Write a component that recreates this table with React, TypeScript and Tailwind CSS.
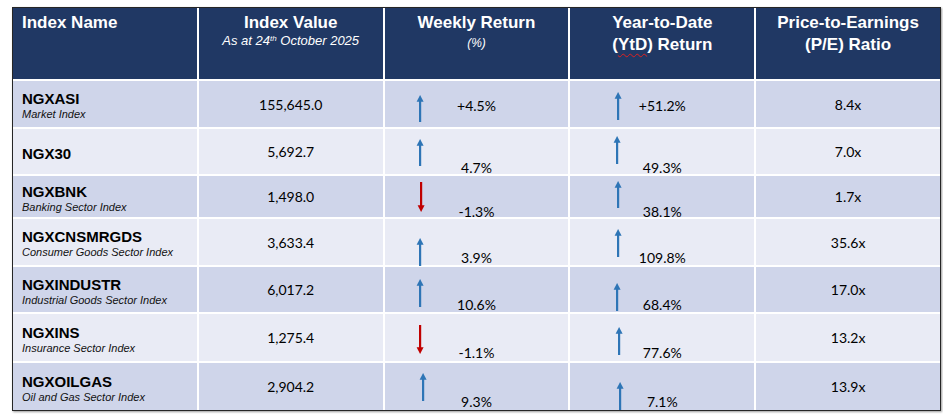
import React from "react";

type Row = {
  code: string;
  sub?: string;
  value: string;
  bg: string;
  wk: string;
  wkUp: boolean;
  ytd: string;
  pe: string;
  textPos: string;
  wkArrow: string;
  wkH: number;
  ytdArrow: string;
  ytdH: number;
};

const rows: Row[] = [
  { code: "NGXASI", sub: "Market Index", value: "155,645.0", bg: "bg-[#cfd5ea]", wk: "+4.5%", wkUp: true, ytd: "+51.2%", pe: "8.4x", textPos: "mt-[17px]", wkArrow: "ml-[30px] mt-[14px]", wkH: 27, ytdArrow: "ml-[43px] mt-[11px]", ytdH: 28 },
  { code: "NGX30", value: "5,692.7", bg: "bg-[#e9ebf5]", wk: "4.7%", wkUp: true, ytd: "49.3%", pe: "7.0x", textPos: "mt-[31px]", wkArrow: "ml-[30px] mt-[10px]", wkH: 27, ytdArrow: "ml-[42px] mt-[7px]", ytdH: 28 },
  { code: "NGXBNK", sub: "Banking Sector Index", value: "1,498.0", bg: "bg-[#cfd5ea]", wk: "-1.3%", wkUp: false, ytd: "38.1%", pe: "1.7x", textPos: "mt-[28px]", wkArrow: "ml-[31px] mt-[6px]", wkH: 30, ytdArrow: "ml-[43px] mt-[5px]", ytdH: 27 },
  { code: "NGXCNSMRGDS", sub: "Consumer Goods Sector Index", value: "3,633.4", bg: "bg-[#e9ebf5]", wk: "3.9%", wkUp: true, ytd: "109.8%", pe: "35.6x", textPos: "mt-[31px]", wkArrow: "ml-[30px] mt-[19px]", wkH: 28, ytdArrow: "ml-[43px] mt-[10px]", ytdH: 28 },
  { code: "NGXINDUSTR", sub: "Industrial Goods Sector Index", value: "6,017.2", bg: "bg-[#cfd5ea]", wk: "10.6%", wkUp: true, ytd: "68.4%", pe: "17.0x", textPos: "mt-[30px]", wkArrow: "ml-[30px] mt-[12px]", wkH: 28, ytdArrow: "ml-[42px] mt-[16px]", ytdH: 28 },
  { code: "NGXINS", sub: "Insurance Sector Index", value: "1,275.4", bg: "bg-[#e9ebf5]", wk: "-1.1%", wkUp: false, ytd: "77.6%", pe: "13.2x", textPos: "mt-[31px]", wkArrow: "ml-[30px] mt-[11px]", wkH: 29, ytdArrow: "ml-[44px] mt-[13px]", ytdH: 28 },
  { code: "NGXOILGAS", sub: "Oil and Gas Sector Index", value: "2,904.2", bg: "bg-[#cfd5ea]", wk: "9.3%", wkUp: true, ytd: "7.1%", pe: "13.9x", textPos: "mt-[31px]", wkArrow: "ml-[33px] mt-[10px]", wkH: 28, ytdArrow: "ml-[45px] mt-[19px]", ytdH: 28 },
];

// slide-style arrow: thin shaft with a small triangular head
function Arrow({ up, h, className }: { up: boolean; h: number; className: string }) {
  const color = up ? "#2e75b6" : "#c00000";
  return (
    <svg
      width={10}
      height={h}
      viewBox={`0 0 10 ${h}`}
      className={`col-start-1 row-start-1 self-start justify-self-start ${className}`}
    >
      {up ? (
        <>
          <rect x={4} y={5} width={2.2} height={h - 5} fill={color} />
          <polygon points="1.6,6.8 5.1,0 8.6,6.8" fill={color} />
        </>
      ) : (
        <>
          <rect x={4} y={0} width={2.2} height={h - 5} fill={color} />
          <polygon points={`1.6,${h - 6.8} 5.1,${h} 8.6,${h - 6.8}`} fill={color} />
        </>
      )}
    </svg>
  );
}

const num = "font-['Lato','Open_Sans',sans-serif] text-[14px] text-black";

function App() {
  return (
    <div className="w-[943px] h-[418px] bg-white pt-[7px] pl-[12px] font-['Liberation_Sans',Arial,sans-serif]">
      <div className="w-[929px] border border-[#262626] border-l-[1.5px] shadow-[1px_1px_2px_rgba(0,0,0,0.4)]">
        <div className="grid grid-cols-5 grid-rows-[71px_46px_45px_41px_46px_45px_47px_47px] gap-[2px] bg-white">
          {/* Header */}
          <div className="bg-[#203864] pl-[9px] pt-[4px] text-white font-bold text-[17px] leading-[22px]">
            Index Name
          </div>
          <div className="bg-[#203864] pt-[4px] text-center text-white">
            <div className="font-bold text-[17px] leading-[22px]">Index Value</div>
            <div className="italic text-[13px] leading-[14px]">
              As at 24<sup className="text-[8px]">th</sup> October 2025
            </div>
          </div>
          <div className="bg-[#203864] pt-[4px] text-center text-white">
            <div className="font-bold text-[17px] leading-[22px]">Weekly Return</div>
            <div className="italic text-[12px] leading-[18px]">(%)</div>
          </div>
          <div className="bg-[#203864] pt-[4px] text-center text-white font-bold text-[17px] leading-[22px]">
            Year-to-Date
            <br />(
            <span className="underline decoration-wavy decoration-[#e02020] decoration-1 underline-offset-[3px]">YtD</span>
            ) Return
          </div>
          <div className="bg-[#203864] pt-[4px] text-center text-white font-bold text-[17px] leading-[22px]">
            Price-to-Earnings
            <br />
            (P/E) Ratio
          </div>

          {/* Body */}
          {rows.map((r) => (
            <React.Fragment key={r.code}>
              <div className={`${r.bg} flex flex-col justify-center pl-[9px] pt-[3px]`}>
                <div className="font-bold text-[15px] leading-[17px] text-black">{r.code}</div>
                {r.sub && <div className="italic text-[11px] leading-[14px] text-[#111]">{r.sub}</div>}
              </div>
              <div className={`${r.bg} flex items-center justify-center ${num}`}>{r.value}</div>
              <div className={`${r.bg} grid`}>
                <Arrow up={r.wkUp} h={r.wkH} className={r.wkArrow} />
                <span className={`col-start-1 row-start-1 self-start justify-self-center leading-4 ${r.textPos} ${num}`}>
                  {r.wk}
                </span>
              </div>
              <div className={`${r.bg} grid`}>
                <Arrow up h={r.ytdH} className={r.ytdArrow} />
                <span className={`col-start-1 row-start-1 self-start justify-self-center leading-4 ${r.textPos} ${num}`}>
                  {r.ytd}
                </span>
              </div>
              <div className={`${r.bg} flex items-center justify-center ${num}`}>{r.pe}</div>
            </React.Fragment>
          ))}
        </div>
      </div>
    </div>
  );
}

export default App;
